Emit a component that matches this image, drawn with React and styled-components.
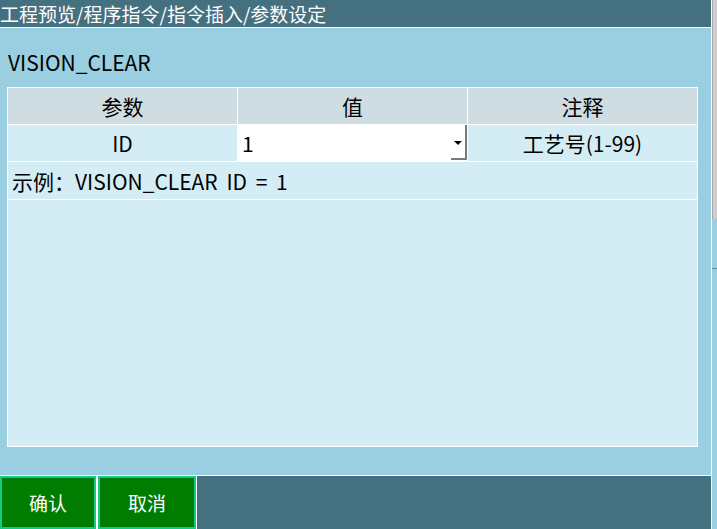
import styled, { createGlobalStyle } from 'styled-components'

const GlobalStyle = createGlobalStyle`
  html, body {
    margin: 0;
    padding: 0;
    background: #99cfe1;
  }
  * {
    box-sizing: border-box;
  }
`

const FONT = `"Noto Sans CJK SC", "Noto Sans", sans-serif`

const Screen = styled.div`
  width: 717px;
  height: 529px;
  display: flex;
  overflow: hidden;
  font-family: ${FONT};
  color: #000;
`

const Main = styled.div`
  width: 712px;
  display: flex;
  flex-direction: column;
  border-right: 1px solid #fff;
`

const TitleBar = styled.div`
  height: 28px;
  background: #44707f;
  border-bottom: 1px solid #fff;
  color: #fff;
  font-size: 19px;
  line-height: 27px;
  white-space: nowrap;
`

const Panel = styled.div`
  flex: 1;
  background: #99cfe1;
  border-bottom: 1px solid #fff;
  padding: 0 13px 28px 7px;
  display: flex;
  flex-direction: column;
`

const Heading = styled.div`
  height: 59px;
  padding: 21px 0 0 1px;
  font-size: 21px;
  line-height: 26px;
`

const Table = styled.div`
  flex: 1;
  display: grid;
  grid-template-columns: repeat(3, 229px);
  grid-template-rows: 36px 36px 37px 1fr;
  gap: 1px;
  padding: 1px;
  background: #fff;
`

const Cell = styled.div`
  background: ${({ $head }) => ($head ? '#cfdde2' : '#d4edf5')};
  display: flex;
  align-items: center;
  justify-content: center;
  font-size: 21px;
  line-height: 1;
`

const Example = styled.div`
  grid-column: 1 / -1;
  background: #d4edf5;
  display: flex;
  align-items: center;
  padding-left: 4px;
  font-size: 21px;
  word-spacing: 4px;
  white-space: pre;
`

const Filler = styled.div`
  grid-column: 1 / -1;
  background: #d4edf5;
`

const SelectBox = styled.div`
  background: #fff;
  display: flex;
  align-items: stretch;
  font-size: 21px;
`

const SelectValue = styled.div`
  flex: 1;
  display: flex;
  align-items: center;
  padding-left: 4px;
`

const DropButton = styled.div`
  width: 16px;
  margin-bottom: 1px;
  border-right: 2px solid #7a7a7a;
  border-bottom: 2px solid #7a7a7a;
  display: flex;
  align-items: center;
  justify-content: center;
`

const Arrow = styled.span`
  width: 0;
  height: 0;
  border-left: 4px solid transparent;
  border-right: 4px solid transparent;
  border-top: 4px solid #000;
  margin-top: 2px;
`

const BottomBar = styled.div`
  height: 53px;
  background: #44707f;
  display: flex;
`

const ButtonGroup = styled.div`
  display: flex;
  gap: 2px;
  padding-right: 1px;
  background: #fff;
`

const Button = styled.button`
  width: ${({ $w }) => $w}px;
  height: 100%;
  margin: 0;
  background: #007c00;
  border: 2px solid #14c98c;
  color: #fff;
  font-family: ${FONT};
  font-size: 19px;
  padding: 0;
  cursor: pointer;
`

const Side = styled.div`
  width: 5px;
  display: flex;
  flex-direction: column;
`

const SideThumb = styled.div`
  height: 219px;
  background: #cdcdcd;
  border-left: 1px solid #a9a9a9;
`

const SideTrack = styled.div`
  flex: 1;
  background: #99cfe1;
  position: relative;

  &::after {
    content: '';
    position: absolute;
    left: 0;
    right: 0;
    top: 49px;
    height: 1px;
    background: #5e8e9e;
  }
`

export default function App() {
  return (
    <>
      <GlobalStyle />
      <Screen>
        <Main>
          <TitleBar>工程预览/程序指令/指令插入/参数设定</TitleBar>
          <Panel>
            <Heading>VISION_CLEAR</Heading>
            <Table>
              <Cell $head>参数</Cell>
              <Cell $head>值</Cell>
              <Cell $head>注释</Cell>
              <Cell>ID</Cell>
              <SelectBox>
                <SelectValue>1</SelectValue>
                <DropButton>
                  <Arrow />
                </DropButton>
              </SelectBox>
              <Cell>工艺号(1-99)</Cell>
              <Example>示例：VISION_CLEAR ID = 1</Example>
              <Filler />
            </Table>
          </Panel>
          <BottomBar>
            <ButtonGroup>
              <Button $w={96}>确认</Button>
              <Button $w={98}>取消</Button>
            </ButtonGroup>
          </BottomBar>
        </Main>
        <Side>
          <SideThumb />
          <SideTrack />
        </Side>
      </Screen>
    </>
  )
}
